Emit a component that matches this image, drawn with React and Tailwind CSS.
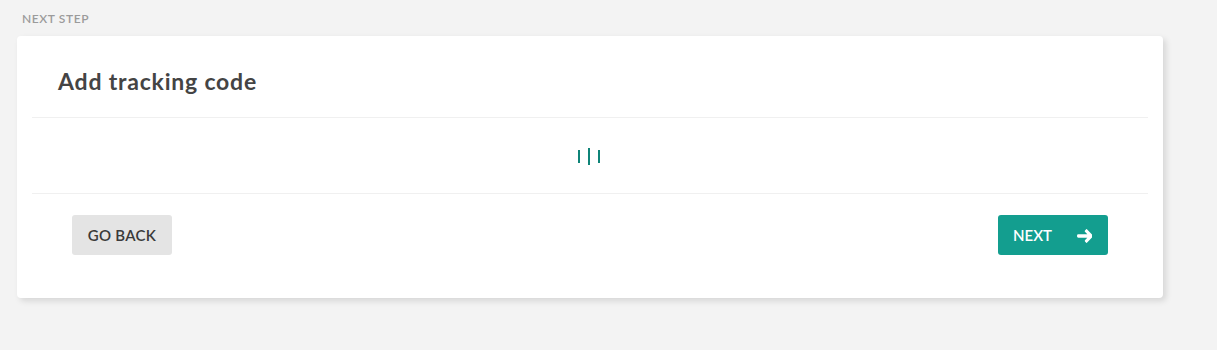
import React from "react";

function Loader() {
  return (
    <div className="flex items-center gap-[8px] mr-[2px]">
      <span className="block w-[2px] h-[13px] bg-[#0f8478]" />
      <span className="block w-[2px] h-[17px] bg-[#0f8478]" />
      <span className="block w-[2px] h-[13px] bg-[#0f8478]" />
    </div>
  );
}

function ArrowRight() {
  return (
    <svg width="15" height="14" viewBox="0 0 15 14" fill="white">
      <path d="M8.2 1.2 L9.6 -0.1 L15 5.5 Q15.6 7 15 8.5 L9.6 14.1 L8.2 12.8 Q7.3 11.8 8.2 10.9 L10.3 8.7 L1.4 8.7 Q0 8.7 0 7.3 L0 6.7 Q0 5.3 1.4 5.3 L10.3 5.3 L8.2 3.1 Q7.3 2.2 8.2 1.2 Z" />
    </svg>
  );
}

export default function App() {
  return (
    <div
      className="min-h-[350px] bg-[#f3f3f3] pt-[12px]"
      style={{ fontFamily: "Lato, 'Open Sans', sans-serif" }}
    >
      <div className="ml-[22px] text-[12px] font-semibold uppercase tracking-[0.6px] text-[#9b9b9b] leading-[14px]">
        Next step
      </div>

      <div className="ml-[17px] mt-[10px] w-[1146px] bg-white rounded-[4px] shadow-[3px_3px_6px_rgba(0,0,0,0.12)] px-[15px]">
        <div className="h-[82px] flex items-center pl-[26px] pt-[10px] border-b border-[#f0f0f0]">
          <h1 className="text-[23px] font-bold text-[#444] tracking-[0.8px]">
            Add tracking code
          </h1>
        </div>

        <div className="h-[76px] flex items-center justify-center pt-[1px] border-b border-[#f0f0f0]">
          <Loader />
        </div>

        <div className="flex justify-between px-[40px] pt-[21px] pb-[43px]">
          <button className="w-[100px] h-[40px] pt-[1px] rounded-[3px] bg-[#e4e4e4] text-[15px] font-semibold text-[#3a3a3a] uppercase tracking-[0.3px]">
            Go back
          </button>
          <button className="w-[110px] h-[40px] pt-[1px] rounded-[3px] bg-[#139e8f] text-[15px] font-semibold text-white uppercase flex items-center pl-[15px] gap-[25px]">
            <span>Next</span>
            <ArrowRight />
          </button>
        </div>
      </div>
    </div>
  );
}
